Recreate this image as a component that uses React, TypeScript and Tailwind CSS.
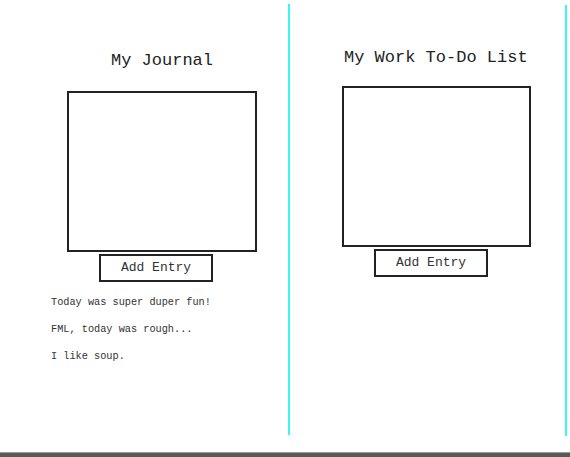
const mono = { fontFamily: '"Liberation Mono", "DejaVu Sans Mono", monospace' };

const entries = ["Today was super duper fun!", "FML, today was rough...", "I like soup."];

export default function App() {
  return (
    <div className="flex h-[457px] w-[570px] flex-col overflow-hidden bg-white text-[#222]" style={mono}>
      <div className="flex h-[452px] items-start">
        {/* journal column */}
        <div className="mt-[4px] h-[431px] w-[290px] shrink-0 border-r-[2px] border-[#3cf6f6]">
          <h1 className="ml-[111px] mt-[47px] text-[17px] leading-[20px] font-normal">My Journal</h1>
          <textarea className="ml-[67px] mt-[20px] block h-[161px] w-[190px] resize-none border-2 border-[#222] bg-white outline-none" />
          <button className="ml-[99px] mt-[2px] block h-[28px] w-[114px] border-2 border-[#222] bg-white text-[13px] leading-[20px] text-[#333]">
            Add Entry
          </button>
          <div className="ml-[51px] mt-[14px] flex flex-col gap-[14px] text-[10.25px] leading-[13px] text-[#333]">
            {entries.map((e) => (
              <p key={e}>{e}</p>
            ))}
          </div>
        </div>

        {/* to-do column */}
        <div className="mt-[5px] h-[431px] w-[277px] shrink-0 border-r-[2px] border-[#3cf6f6]">
          <h1 className="ml-[54px] mt-[43px] text-[17px] leading-[20px] font-normal">My Work To-Do List</h1>
          <textarea className="ml-[52px] mt-[18px] block h-[161px] w-[189px] resize-none border-2 border-[#222] bg-white outline-none" />
          <button className="ml-[84px] mt-[2px] block h-[28px] w-[114px] border-2 border-[#222] bg-white text-[13px] leading-[20px] text-[#333]">
            Add Entry
          </button>
        </div>
      </div>
      <div className="h-[5px] border-t border-[#9a9a9a] bg-[#5a5a5a]" />
    </div>
  );
}
